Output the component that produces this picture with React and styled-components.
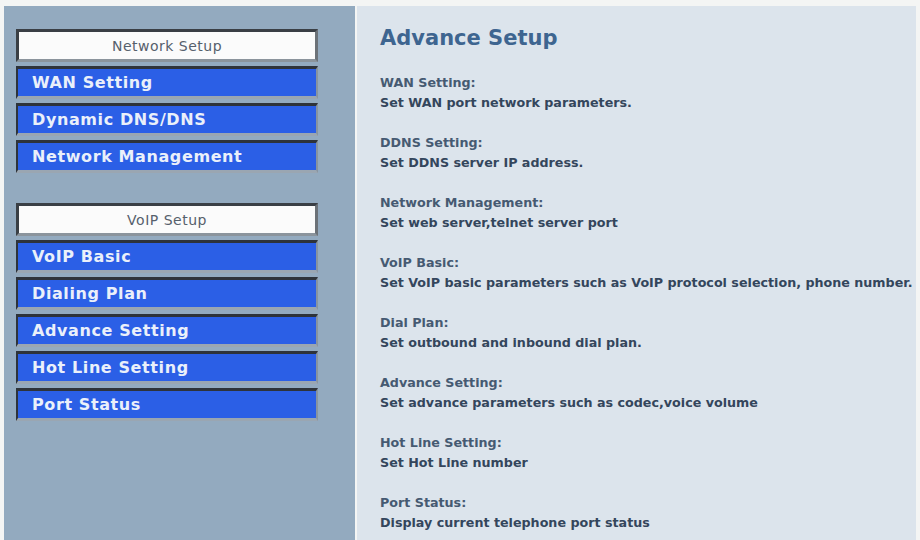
import React from 'react';
import styled, { createGlobalStyle } from 'styled-components';

const Global = createGlobalStyle`
  html, body {
    margin: 0;
    padding: 0;
    background: #f4f5f4;
  }
  #root {
    width: 920px;
    height: 540px;
  }
`;

const networkItems = ['WAN Setting', 'Dynamic DNS/DNS', 'Network Management'];
const voipItems = ['VoIP Basic', 'Dialing Plan', 'Advance Setting', 'Hot Line Setting', 'Port Status'];

const help = [
  ['WAN Setting:', 'Set WAN port network parameters.'],
  ['DDNS Setting:', 'Set DDNS server IP address.'],
  ['Network Management:', 'Set web server,telnet server port'],
  ['VoIP Basic:', 'Set VoIP basic parameters such as VoIP protocol selection, phone number.'],
  ['Dial Plan:', 'Set outbound and inbound dial plan.'],
  ['Advance Setting:', 'Set advance parameters such as codec,voice volume'],
  ['Hot Line Setting:', 'Set Hot Line number'],
  ['Port Status:', 'Display current telephone port status'],
];

const App = () => (
  <>
    <Global />
    <Page>
      <Sidebar>
        <Menu>
          <MenuHeader>Network Setup</MenuHeader>
          {networkItems.map((item) => <MenuItem key={item}>{item}</MenuItem>)}
        </Menu>
        <Menu>
          <MenuHeader>VoIP Setup</MenuHeader>
          {voipItems.map((item) => <MenuItem key={item}>{item}</MenuItem>)}
        </Menu>
      </Sidebar>
      <Content>
        <Title>Advance Setup</Title>
        {help.map(([label, text]) => (
          <Entry key={label}>
            <Label>{label}</Label>
            <Text>{text}</Text>
          </Entry>
        ))}
      </Content>
    </Page>
  </>
);

const Page = styled.div`
  display: flex;
  width: 920px;
  height: 540px;
  box-sizing: border-box;
  padding: 6px 4px 0 4px;
  gap: 2px;
`;

const Sidebar = styled.div`
  width: 351px;
  background: #93aabf;
  box-sizing: border-box;
  padding: 23px 0 0 12px;
  display: flex;
  flex-direction: column;
  gap: 30px;
`;

const Menu = styled.div`
  width: 302px;
  display: flex;
  flex-direction: column;
  gap: 4px;
`;

const MenuHeader = styled.div`
  height: 33px;
  box-sizing: border-box;
  background: #fbfbfb;
  border: 3px solid #3a3f45;
  border-right-color: #6c7278;
  border-bottom-color: #8b949c;
  display: flex;
  align-items: center;
  justify-content: center;
  font-family: "DejaVu Sans", sans-serif;
  font-size: 14px;
  letter-spacing: 0.5px;
  color: #56606c;
`;

const MenuItem = styled.div`
  height: 33px;
  box-sizing: border-box;
  background: #2b5fe6;
  border-top: 3px solid #2e333a;
  border-left: 2px solid #2e333a;
  border-bottom: 3px solid #9aa6b2;
  border-right: 2px solid #8894a0;
  padding-left: 14px;
  display: flex;
  align-items: center;
  font-family: "DejaVu Sans", sans-serif;
  font-weight: bold;
  font-size: 16px;
  letter-spacing: 0.6px;
  color: #eaf0fa;
`;

const Content = styled.div`
  flex: 1;
  background: #dce4ec;
  box-sizing: border-box;
  padding: 20px 0 0 23px;
  color: #34485f;
`;

const Title = styled.h1`
  margin: 0 0 23px 0;
  font-family: "DejaVu Sans", sans-serif;
  font-weight: bold;
  font-size: 21px;
  color: #3e6590;
`;

const Entry = styled.div`
  margin-bottom: 20px;
  font-family: "DejaVu Sans", sans-serif;
  font-weight: bold;
  font-size: 12.7px;
  line-height: 20px;
`;

const Label = styled.div`
  color: #465a72;
`;

const Text = styled.div`
  color: #34465c;
`;

export default App;
